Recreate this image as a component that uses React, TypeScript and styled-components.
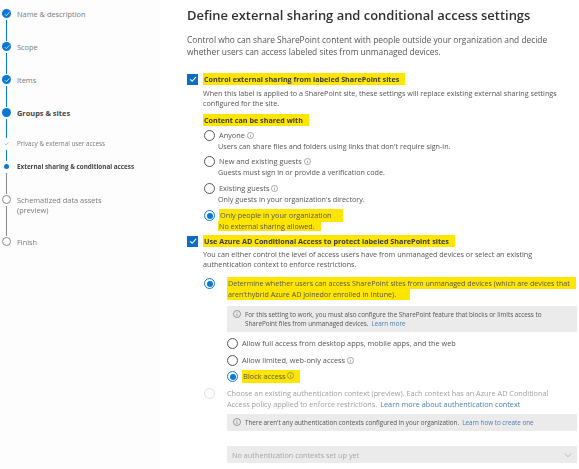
import React from "react";
import styled, { createGlobalStyle } from "styled-components";

const GlobalStyle = createGlobalStyle`
	html, body {
		margin: 0;
		padding: 0;
		background: #fff;
	}
	body {
		font-family: "Open Sans", "Noto Sans", sans-serif;
		color: #444;
	}
`;

const Page = styled.div`
	display: flex;
	width: 579px;
	height: 469px;
	overflow: hidden;
	filter: blur(0.3px);
`;

const Sidebar = styled.nav`
	width: 160px;
	flex: none;
	padding: 9px 0 0 1px;
	box-sizing: border-box;
	background: #fdfdfd;
`;

const Step = styled.div<{ $height: number }>`
	display: flex;
	gap: 5px;
	height: ${(p) => p.$height}px;
`;

const Marker = styled.div`
	width: 11px;
	flex: none;
	display: flex;
	flex-direction: column;
	align-items: center;
`;

const Dot = styled.span<{ $kind: "done" | "current" | "subdone" | "subcurrent" | "todo" }>`
	flex: none;
	box-sizing: border-box;
	display: flex;
	align-items: center;
	justify-content: center;
	border-radius: 50%;
	width: 9px;
	height: 9px;
	background: ${(p) => (p.$kind === "todo" || p.$kind === "subdone" ? "#fff" : "#0a78d4")};
	border: ${(p) => (p.$kind === "todo" ? "1px solid #8a8886" : "none")};
	${(p) => p.$kind === "subcurrent" && "width: 5px; height: 5px; margin: 2px 0;"}
`;

const Connector = styled.span<{ $grey?: boolean }>`
	flex: 1;
	width: 1px;
	margin: 2px 0 1px;
	background: ${(p) => (p.$grey ? "#8a8886" : "#0a78d4")};
`;

const StepLabel = styled.div<{ $bold?: boolean; $small?: boolean }>`
	font-size: ${(p) => (p.$small ? "6.3px" : "7.4px")};
	font-weight: ${(p) => (p.$bold ? 700 : 400)};
	line-height: 10px;
	color: ${(p) => (p.$bold ? "#444" : "#7a7a7a")};
	white-space: nowrap;
`;

const Main = styled.main`
	flex: 1;
	padding: 6px 0 0 27px;
	min-width: 0;
`;

const Title = styled.h1`
	margin: 0;
	font-size: 12.95px;
	line-height: 18px;
	font-weight: 600;
	color: #323130;
	white-space: nowrap;
`;

const Lead = styled.p`
	margin: 10px 0 0;
	font-size: 8.4px;
	line-height: 12px;
	color: #555;
	white-space: nowrap;
`;

const CheckRow = styled.div<{ $top: number }>`
	display: flex;
	align-items: center;
	gap: 5px;
	height: 12px;
	margin-top: ${(p) => p.$top}px;
`;

const CheckBox = styled.span`
	width: 11px;
	height: 11px;
	flex: none;
	display: flex;
	align-items: center;
	justify-content: center;
	background: #0a6fc4;
`;

const Strong = styled.span<{ $size?: number }>`
	font-size: ${(p) => p.$size ?? 7.2}px;
	font-weight: 700;
	color: #3a3a3a;
	white-space: nowrap;
`;

const Mark = styled.span<{ $flat?: boolean }>`
	background: #ffe600;
	padding: ${(p) => (p.$flat ? "0 6px 0 1px" : "1px 6px 1px 1px")};
	-webkit-box-decoration-break: clone;
	box-decoration-break: clone;
`;

const Help = styled.p<{ $indent: number; $top?: number }>`
	margin: ${(p) => p.$top ?? 0}px 0 0 ${(p) => p.$indent}px;
	font-size: 7.2px;
	line-height: 10px;
	color: #555;
	white-space: nowrap;
`;

const GroupTitle = styled.div`
	margin: 7px 0 0 13px;
	height: 10px;
	display: flex;
	align-items: center;
`;

const OptionRow = styled.div<{ $indent: number; $top: number }>`
	display: flex;
	align-items: center;
	gap: 4px;
	height: 11px;
	margin: ${(p) => p.$top}px 0 0 ${(p) => p.$indent}px;
`;

const Radio = styled.span<{ $checked?: boolean; $disabled?: boolean }>`
	width: 11px;
	height: 11px;
	flex: none;
	box-sizing: border-box;
	border-radius: 50%;
	border: 1px solid ${(p) => (p.$disabled ? "#ddd" : p.$checked ? "#0a78d4" : "#555")};
	display: flex;
	align-items: center;
	justify-content: center;
	&::after {
		content: "";
		display: ${(p) => (p.$checked ? "block" : "none")};
		width: 6px;
		height: 6px;
		border-radius: 50%;
		background: #0a78d4;
	}
`;

const OptionText = styled.span`
	display: inline-flex;
	align-items: center;
	gap: 2px;
	font-size: 7.35px;
	line-height: 11px;
	color: #555;
	white-space: nowrap;
`;

const Wide = styled.div<{ $top: number; $faded?: boolean }>`
	display: flex;
	gap: 12px;
	margin: ${(p) => p.$top}px 0 0 17px;
	color: ${(p) => (p.$faded ? "#a0a0a0" : "#555")};
`;

const WideText = styled.div<{ $size: number }>`
	font-size: ${(p) => p.$size}px;
	line-height: 11px;
	white-space: nowrap;
`;

const Callout = styled.div<{ $height: number; $top: number }>`
	box-sizing: border-box;
	display: flex;
	gap: 4px;
	margin: ${(p) => p.$top}px 0 0 40px;
	width: 350px;
	height: ${(p) => p.$height}px;
	padding: 4px 6px;
	background: #ebebeb;
	font-size: 6.3px;
	line-height: 9px;
	color: #555;
	white-space: nowrap;
`;

const CalloutIcon = styled.span`
	flex: none;
`;

const LinkText = styled.span`
	color: #4a7fb5;
	margin-left: 3px;
`;

const Select = styled.div`
	box-sizing: border-box;
	display: flex;
	align-items: center;
	justify-content: space-between;
	margin: 15px 0 0 40px;
	width: 350px;
	height: 17px;
	padding: 0 5px;
	background: #ebebeb;
	font-size: 7.3px;
	color: #a6a6a6;
`;

const Info = ({ size = 7 }: { size?: number }) => (
	<svg width={size} height={size} viewBox="0 0 10 10" fill="none" stroke="#666" strokeWidth="0.8">
		<circle cx="5" cy="5" r="4.4" />
		<path d="M5 4.4v3M5 2.6v.8" />
	</svg>
);

const Tick = ({ size, color = "#fff" }: { size: number; color?: string }) => (
	<svg width={size} height={size} viewBox="0 0 10 10" fill="none" stroke={color} strokeWidth="1.3">
		<path d="M1.5 5.4l2.4 2.4 5-5.4" />
	</svg>
);

const App = () => (
	<Page>
		<GlobalStyle />
		<Sidebar>
			<Step $height={33}>
				<Marker>
					<Dot $kind="done"><Tick size={6} /></Dot>
					<Connector />
				</Marker>
				<StepLabel>Name &amp; description</StepLabel>
			</Step>
			<Step $height={33}>
				<Marker>
					<Dot $kind="done"><Tick size={6} /></Dot>
					<Connector />
				</Marker>
				<StepLabel>Scope</StepLabel>
			</Step>
			<Step $height={33}>
				<Marker>
					<Dot $kind="done"><Tick size={6} /></Dot>
					<Connector />
				</Marker>
				<StepLabel>Items</StepLabel>
			</Step>
			<Step $height={31}>
				<Marker>
					<Dot $kind="current" />
					<Connector />
				</Marker>
				<StepLabel $bold>Groups &amp; sites</StepLabel>
			</Step>
			<Step $height={23}>
				<Marker>
					<Dot $kind="subdone"><Tick size={5} color="#5aa5e0" /></Dot>
					<Connector />
				</Marker>
				<StepLabel $small>Privacy &amp; external user access</StepLabel>
			</Step>
			<Step $height={33}>
				<Marker>
					<Dot $kind="subcurrent" />
					<Connector $grey />
				</Marker>
				<StepLabel $small $bold>External sharing &amp; conditional access</StepLabel>
			</Step>
			<Step $height={42}>
				<Marker>
					<Dot $kind="todo" />
					<Connector $grey />
				</Marker>
				<StepLabel>Schematized data assets<br />(preview)</StepLabel>
			</Step>
			<Step $height={12}>
				<Marker>
					<Dot $kind="todo" />
				</Marker>
				<StepLabel>Finish</StepLabel>
			</Step>
		</Sidebar>
		<Main>
			<Title>Define external sharing and conditional access settings</Title>
			<Lead>
				Control who can share SharePoint content with people outside your organization and decide
				<br />
				whether users can access labeled sites from unmanaged devices.
			</Lead>

			<CheckRow $top={15}>
				<CheckBox><Tick size={8} /></CheckBox>
				<Strong><Mark>Control external sharing from labeled SharePoint sites</Mark></Strong>
			</CheckRow>
			<Help $indent={16} $top={3}>
				When this label is applied to a SharePoint site, these settings will replace existing external sharing settings
				<br />
				configured for the site.
			</Help>
			<GroupTitle>
				<Strong style={{ marginLeft: 3 }}><Mark>Content can be shared with</Mark></Strong>
			</GroupTitle>

			<OptionRow $indent={17} $top={5}>
				<Radio />
				<OptionText>Anyone <Info /></OptionText>
			</OptionRow>
			<Help $indent={31}>Users can share files and folders using links that don't require sign-in.</Help>
			<OptionRow $indent={17} $top={5}>
				<Radio />
				<OptionText>New and existing guests <Info /></OptionText>
			</OptionRow>
			<Help $indent={31}>Guests must sign in or provide a verification code.</Help>
			<OptionRow $indent={17} $top={6}>
				<Radio />
				<OptionText>Existing guests <Info /></OptionText>
			</OptionRow>
			<Help $indent={31}>Only guests in your organization's directory.</Help>
			<OptionRow $indent={17} $top={6}>
				<Radio $checked />
				<OptionText><Mark>Only people in your organization&nbsp;&nbsp;&nbsp;</Mark></OptionText>
			</OptionRow>
			<Help $indent={31}><Mark $flat>No external sharing allowed.</Mark></Help>

			<CheckRow $top={4}>
				<CheckBox><Tick size={8} /></CheckBox>
				<Strong $size={7.25}><Mark>Use Azure AD Conditional Access to protect labeled SharePoint sites</Mark></Strong>
			</CheckRow>
			<Help $indent={16} $top={2}>
				You can either control the level of access users have from unmanaged devices or select an existing
				<br />
				authentication context to enforce restrictions.
			</Help>

			<Wide $top={9}>
				<Radio $checked />
				<WideText $size={7.15}>
					<Mark>
						Determine whether users can access SharePoint sites from unmanaged devices (which are devices that
						<br />
						aren'thybrid Azure AD joinedor enrolled in Intune).&nbsp;&nbsp;&nbsp;&nbsp;
					</Mark>
				</WideText>
			</Wide>
			<Callout $top={6} $height={26}>
				<CalloutIcon><Info size={8} /></CalloutIcon>
				<div>
					For this setting to work, you must also configure the SharePoint feature that blocks or limits access to
					<br />
					SharePoint files from unmanaged devices.<LinkText>Learn more</LinkText>
				</div>
			</Callout>
			<OptionRow $indent={40} $top={6}>
				<Radio />
				<OptionText>Allow full access from desktop apps, mobile apps, and the web</OptionText>
			</OptionRow>
			<OptionRow $indent={40} $top={6}>
				<Radio />
				<OptionText>Allow limited, web-only access <Info /></OptionText>
			</OptionRow>
			<OptionRow $indent={40} $top={5}>
				<Radio $checked />
				<OptionText><Mark>Block access <Info /></Mark></OptionText>
			</OptionRow>
			<Wide $top={6} $faded>
				<Radio $disabled />
				<WideText $size={7.3}>
					Choose an existing authentication context (preview). Each context has an Azure AD Conditional
					<br />
					Access policy applied to enforce restrictions.<LinkText>Learn more about authentication context</LinkText>
				</WideText>
			</Wide>
			<Callout $top={4} $height={17}>
				<CalloutIcon><Info size={8} /></CalloutIcon>
				<div>
					There aren't any authentication contexts configured in your organization.<LinkText>Learn how to create one</LinkText>
				</div>
			</Callout>
			<Select>
				No authentication contexts set up yet
				<svg width="8" height="8" viewBox="0 0 10 10" fill="none" stroke="#a6a6a6" strokeWidth="0.9">
					<path d="M1 3.2l4 4 4-4" />
				</svg>
			</Select>
		</Main>
	</Page>
);

export default App;
